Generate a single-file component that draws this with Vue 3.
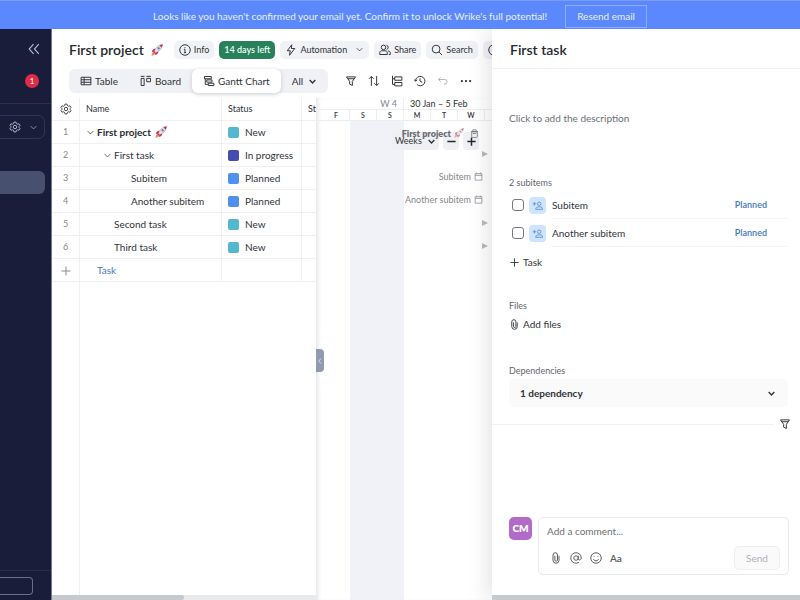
<script setup>
import { h, ref } from 'vue'

const shapes = {
  collapse: ['M7.5 2.5 2.5 8l5 5.5M13.5 2.5 8.5 8l5 5.5'],
  gear: ['M6.6 1.5h2.8l.5 2 1.4.8 2-.6 1.4 2.5L13.3 7.6v.8l1.4 1.4-1.4 2.5-2-.6-1.4.8-.5 2H6.6l-.5-2-1.4-.8-2 .6-1.4-2.5 1.4-1.4v-.8L1.300 6.200l1.400-2.500 2 .6 1.400-.8z', 'M10.300 8a2.300 2.300 0 1 1-4.600 0 2.300 2.300 0 0 1 4.600 0z'],
  chevron: ['M3 5.500 8 10.500l5-5'],
  left: ['M10 3 5.500 8 10 13'],
  info: ['M15 8A7 7 0 1 1 1 8a7 7 0 0 1 14 0z', 'M8 7v4.500M8 4.200v1.200M6.500 7H8M6.500 11.500h3'],
  circle: ['M15 8A7 7 0 1 1 1 8a7 7 0 0 1 14 0z'],
  bolt: ['M9 1 3 9h4l-1 6 7-9H8.500z'],
  share: ['M9 4.500a3 3 0 1 1-6 0 3 3 0 0 1 6 0z', 'M1 14v-2.500C1 9.800 2.500 9 4 9h4c1.500 0 3 .8 3 2.500V14z', 'M10 1.600a3 3 0 0 1 0 5.800M12 9.300c2 .2 3 1 3 2.700v2h-2'],
  search: ['M12 6.800a5.200 5.200 0 1 1-10.400 0 5.200 5.200 0 0 1 10.400 0z', 'm10.700 10.700 4 4'],
  table: ['M1.500 3h13v10h-13zM1.500 6.300h13M1.500 9.700h13M5.500 3v10'],
  board: ['M1.500 4.500h4V14h-4zM9 4.500h5V9H9zM1 1.800h5M8.500 1.800h6'],
  gantt: ['M2 2h9v3H2zM5 6.500h7v3H5zM7 11h7.500v3H7zM3 5v7.500h4'],
  filter: ['M2 2.500h12L9.800 8.500V14l-3.600-1.800V8.500z', 'M4 5h8'],
  sort: ['M4.500 14.500V2M1.500 5l3-3 3 3M11.500 1.500V14M8.500 11l3 3 3-3'],
  hierarchy: ['M2 1v11.500h3M2 5h3M5 2.500h9.500v4.500H5zM5 10h9.500v4.500H5z'],
  history: ['M2 8a6.300 6.300 0 1 1 1.800 4.500M.3 6 2 8.300 4.300 6.500M8 4.500V8l3 2'],
  undo: ['M5 3 2 6l3 3M2 6h8.500a3 3 0 0 1 0 6H9'],
  dots: ['M2.500 8h.01M8 8h.01M13.500 8h.01'],
  plus: ['M8 2v12M2 8h12'],
  minus: ['M2 8h12'],
  calendar: ['M2 3h12v11.500H2zM2 6h12M4.500 1v2M11.500 1v2'],
  clipboard: ['M3 5h10v8.500a1.500 1.500 0 0 1-1.500 1.500h-7A1.500 1.500 0 0 1 3 13.500zM1.500 4.500h13M5 4.500v-3h6v3M5 8h6'],
  clip: ['M12 5v6a4 4 0 0 1-8 0V4a3 3 0 0 1 6 0v7a1.800 1.800 0 0 1-3.500 0V5'],
  assign: ['M3.500 3v5M1 5.500h5M13 5.500a2.500 2.500 0 1 1-5 0 2.500 2.500 0 0 1 5 0z', 'M5.500 13.500C5.500 11 7 10 9 10h3c2 0 3.500 1 3.500 3.500z'],
  at: ['M11 8a3 3 0 1 1-6 0 3 3 0 0 1 6 0z', 'M11 5v4c0 2.500 4 2.200 4-1a7 7 0 1 0-3 5.700'],
  smile: ['M15 8A7 7 0 1 1 1 8a7 7 0 0 1 14 0z', 'M4.500 9.500a3.800 3.800 0 0 0 7 0M5.500 5.500v1M10.500 5.500v1']
}

const Icon = (props) =>
  h('svg', { class: 'icon', viewBox: '0 0 16 16', 'aria-hidden': 'true' }, shapes[props.name].map((d) => h('path', { d })))
Icon.props = ['name']

const Rocket = () =>
  h('svg', { class: 'rocket', viewBox: '0 0 16 16', 'aria-hidden': 'true' }, [
    h('path', { d: 'M3.500 10.500C1.500 11 1 13 .5 15.500c2.500-.5 4.500-1 5-3z', fill: '#f08a4b' }),
    h('path', { d: 'M6 6.500C3.500 6 2 8 1.200 10.500L5 10zM9.500 10c.5 2.500-1.500 4-4 4.800L6 11z', fill: '#c92a50' }),
    h('path', { d: 'M4.500 9.500C6 5 9.500 1.500 15.500.5 14.500 6.500 11 10 6.500 11.500z', fill: '#dfe0ea', stroke: '#8b7590', 'stroke-width': '.6' }),
    h('path', { d: 'M11.300 1.900c1.400-.8 2.700-1.200 4.200-1.400-.2 1.500-.6 2.800-1.400 4.200z', fill: '#c92a50' }),
    h('path', { d: 'm3.700 9.400 2.900 2.900-1 1-2.900-2.900z', fill: '#c92a50' }),
    h('circle', { cx: 10.2, cy: 5.8, r: 1.5, fill: '#5d6f9f' })
  ])

const rows = [
  { name: 'First project', level: 0, status: 'New', tone: 'new', open: true, project: true },
  { name: 'First task', level: 1, status: 'In progress', tone: 'progress', open: true },
  { name: 'Subitem', level: 2, status: 'Planned', tone: 'planned' },
  { name: 'Another subitem', level: 2, status: 'Planned', tone: 'planned' },
  { name: 'Second task', level: 1, status: 'New', tone: 'new' },
  { name: 'Third task', level: 1, status: 'New', tone: 'new' }
]
const tools = [
  ['filter', 'Filter'], ['sort', 'Sort'], ['hierarchy', 'Hierarchy'],
  ['history', 'History'], ['undo', 'Undo'], ['dots', 'More']
]
const days = ['F', 'S', 'S', 'M', 'T', 'W']
const subitems = ['Subitem', 'Another subitem']
const zoom = ref('Weeks')
const comment = ref('')
</script>

<template>
  <div class="app">
    <div class="banner">
      <span>Looks like you haven't confirmed your email yet. Confirm it to unlock Wrike's full potential!</span>
      <button class="resend">Resend email</button>
    </div>
    <div class="body">
      <nav class="sidebar">
        <button class="collapse" aria-label="Collapse sidebar"><Icon name="collapse" /></button>
        <span class="badge">1</span>
        <div class="space">
          <button class="space-settings" aria-label="Space settings"><Icon name="gear" /><Icon name="chevron" class="small" /></button>
        </div>
        <a href="#" class="current" aria-label="First project"></a>
        <div class="side-foot"><button class="side-action" aria-label="Invite"></button></div>
      </nav>

      <main class="main">
        <header class="head">
          <h1>First project <Rocket /></h1>
          <button class="chip"><Icon name="info" />Info</button>
          <button class="chip trial">14 days left</button>
          <button class="chip auto"><Icon name="bolt" /><span>Automation</span><Icon name="chevron" class="small" /></button>
          <button class="chip"><Icon name="share" />Share</button>
          <button class="chip"><Icon name="search" />Search</button>
          <button class="chip" aria-label="Help"><Icon name="circle" /></button>
        </header>
        <div class="toolbar">
          <div class="tabs">
            <button class="tab"><Icon name="table" />Table</button>
            <button class="tab"><Icon name="board" />Board</button>
            <button class="tab active"><Icon name="gantt" />Gantt Chart</button>
            <button class="tab">All<Icon name="chevron" class="small bold" /></button>
          </div>
          <div class="tools">
            <button v-for="[icon, label] in tools" :key="icon" :class="icon" :aria-label="label"><Icon :name="icon" /></button>
          </div>
        </div>

        <div class="work">
          <section class="grid">
            <table>
              <colgroup><col class="c-num" /><col class="c-name" /><col class="c-status" /><col /></colgroup>
              <thead>
                <tr>
                  <th class="num"><button aria-label="Table settings"><Icon name="gear" /></button></th>
                  <th>Name</th>
                  <th>Status</th>
                  <th>St</th>
                </tr>
              </thead>
              <tbody>
                <tr v-for="(row, i) in rows" :key="row.name">
                  <td class="num">{{ i + 1 }}</td>
                  <td>
                    <div class="name" :class="['level-' + row.level, { project: row.project }]">
                      <span class="twist"><Icon v-if="row.open" name="chevron" class="small" /></span>
                      <span>{{ row.name }}</span><Rocket v-if="row.project" />
                    </div>
                  </td>
                  <td><div class="status"><i :class="row.tone"></i>{{ row.status }}</div></td>
                  <td></td>
                </tr>
                <tr>
                  <td class="num"><Icon name="plus" class="add" /></td>
                  <td><a href="#" class="add-task">Task</a></td>
                  <td></td>
                  <td></td>
                </tr>
              </tbody>
            </table>
            <div class="track"><div class="thumb"></div></div>
          </section>

          <section class="gantt">
            <button class="splitter" aria-label="Hide table"><Icon name="left" /></button>
            <div class="weeks"><span class="week past">W 4</span><span class="week">30 Jan – 5 Feb</span></div>
            <div class="days"><span v-for="(d, i) in days" :key="i">{{ d }}</span></div>
            <div class="canvas">
              <div class="weekend"></div>
              <div class="zoom">
                <label class="scale">
                  <select v-model="zoom" aria-label="Time scale"><option>Weeks</option><option>Days</option><option>Months</option></select>
                  <Icon name="chevron" class="small bold" />
                </label>
                <button aria-label="Zoom out"><Icon name="minus" /></button>
                <button aria-label="Zoom in"><Icon name="plus" /></button>
              </div>
              <ul class="bars">
                <li class="title">First project <Rocket /><Icon name="clipboard" /></li>
                <li class="mark"></li>
                <li>Subitem <Icon name="calendar" /></li>
                <li>Another subitem <Icon name="calendar" /></li>
                <li class="mark"></li>
                <li class="mark"></li>
              </ul>
            </div>
          </section>
        </div>
      </main>

      <aside class="panel">
        <h2>First task</h2>
        <div class="details">
          <p class="description">Click to add the description</p>
          <h3>2 subitems</h3>
          <ul class="subitems">
            <li v-for="(s, i) in subitems" :key="s">
              <input :id="'sub-' + i" type="checkbox" />
              <span class="assign"><Icon name="assign" /></span>
              <label :for="'sub-' + i">{{ s }}</label>
              <span class="state">Planned</span>
            </li>
          </ul>
          <button class="plain"><Icon name="plus" />Task</button>
          <h3 class="files">Files</h3>
          <button class="plain"><Icon name="clip" />Add files</button>
          <h3 class="deps">Dependencies</h3>
          <button class="dependency">1 dependency<Icon name="chevron" class="small bold" /></button>
        </div>
        <div class="stream"><hr /><button aria-label="Filter activity"><Icon name="filter" /></button></div>
        <form class="comment" @submit.prevent>
          <span class="avatar">CM</span>
          <div class="editor">
            <input v-model="comment" type="text" aria-label="Comment" placeholder="Add a comment..." />
            <div class="actions">
              <button type="button" aria-label="Attach"><Icon name="clip" /></button>
              <button type="button" aria-label="Mention"><Icon name="at" /></button>
              <button type="button" aria-label="Emoji"><Icon name="smile" /></button>
              <button type="button" class="format">Aa</button>
              <button class="send" disabled>Send</button>
            </div>
          </div>
        </form>
        <div class="panel-scroll"></div>
      </aside>
    </div>
  </div>
</template>

<style>
body { overflow: hidden; }
</style>

<style scoped>
.app, .app * { box-sizing: border-box; }
.app {
  height: 100vh;
  display: flex;
  flex-direction: column;
  font: 10px/16px Lato, "Open Sans", sans-serif;
  color: #2f333a;
  background: #fff;
}
button, input, select { font: inherit; color: inherit; margin: 0; padding: 0; border: 0; background: none; }
button { display: flex; align-items: center; justify-content: center; white-space: nowrap; }
h1, h2, h3, p, ul { margin: 0; padding: 0; font-weight: 400; list-style: none; }
a { text-decoration: none; }
.app :deep(.icon) { width: 12px; height: 12px; flex: none; fill: none; stroke: currentColor; stroke-width: 1.3; }
.app :deep(.small) { width: 9px; height: 9px; }
.app :deep(.bold) { stroke-width: 2.5; }
.app :deep(.rocket) { width: 12px; height: 12px; flex: none; }

.banner {
  flex: none;
  height: 29px;
  display: flex;
  align-items: center;
  justify-content: center;
  gap: 18px;
  padding-top: 2px;
  background: #5b89fd;
  border-top: 1px solid #789df5;
  color: #e6eeff;
  white-space: nowrap;
}
.resend { height: 23px; padding: 0 11px; border: 1px solid #8eaefd; }

.body { flex: 1; min-height: 0; display: flex; }

.sidebar {
  flex: none;
  width: 52px;
  display: flex;
  flex-direction: column;
  background: #191d39;
  border-right: 1px solid #747895;
  color: #b6b9c9;
}
.collapse { align-self: flex-end; margin: 13px 10px 18px 0; }
.collapse .icon { width: 14px; height: 14px; }
.badge {
  align-self: flex-end;
  width: 14px;
  height: 14px;
  margin-right: 12px;
  border-radius: 50%;
  background: #df2d48;
  color: #fff;
  font-size: 8px;
  line-height: 14px;
  text-align: center;
}
.space { margin-top: 15px; padding: 11px 6px 0 0; border-top: 1px solid #2b3050; }
.space-settings {
  width: 100%;
  height: 24px;
  gap: 8px;
  justify-content: flex-end;
  padding-right: 6px;
  border: 1px solid #303554;
  border-left: 0;
  border-radius: 0 7px 7px 0;
}
.current { height: 23px; margin: 32px 6px 0 0; border-radius: 0 6px 6px 0; background: #47506f; }
.side-foot { margin-top: auto; padding: 6px 18px 5px 0; border-top: 1px solid #292d4a; }
.side-action { width: 100%; height: 18px; border: 1px solid #6b6f86; border-left: 0; border-radius: 0 4px 4px 0; }

.main { flex: 1; min-width: 0; overflow: hidden; display: flex; flex-direction: column; }
.head { display: flex; align-items: center; gap: 5px; padding: 11px 0 0 17px; height: 30px; }
h1 { display: flex; align-items: center; gap: 7px; margin-right: 6px; font-size: 14px; line-height: 18px; font-weight: 600; white-space: nowrap; color: #25282e; }
h1 :deep(.rocket), h1 .rocket { width: 16px; height: 16px; }
.chip { flex: none; height: 18px; gap: 3px; padding: 0 5px; border-radius: 5px; background: #f1f2f5; font-size: 9px; }
.trial { background: #28815b; color: #eafff4; font-weight: 600; }
.auto span { margin-right: 5px; }
.toolbar { display: flex; align-items: center; gap: 17px; padding: 10px 0 5px 17px; }
.tabs { flex: none; display: flex; border-radius: 6px; background: #f0f1f5; }
.tab { height: 24px; gap: 3px; padding: 0 11px; border-radius: 6px; }
.tab.active { background: #fff; box-shadow: 0 1px 4px #c8cad0; }
.tab .small { margin-left: 2px; }
.tools { display: flex; gap: 11px; }
.tools .undo { color: #b4b6bb; }
.tools .dots .icon { stroke-width: 3; stroke-linecap: round; }

.work { flex: 1; min-height: 0; display: flex; }
.grid { flex: 3 1 0; min-width: 0; display: flex; flex-direction: column; overflow: hidden; background: linear-gradient(to right, transparent 27px, #eff0f2 27px, #eff0f2 28px, transparent 28px); }
table { width: 100%; table-layout: fixed; border-collapse: separate; border-spacing: 0; }
.c-num { width: 28px; }
.c-name { width: 142px; }
.c-status { width: 80px; }
th, td { height: 23px; padding: 0 0 0 6px; border-right: 1px solid #eff0f2; border-bottom: 1px solid #eff0f2; text-align: left; font-weight: 400; white-space: nowrap; overflow: hidden; }
th { font-size: 9px; }
th:last-child, td:last-child { border-right: 0; }
.num { padding: 0; text-align: center; color: #85898f; font-size: 9px; }
.num button { width: 100%; color: #42464d; }
.num .icon { vertical-align: middle; }
.add { stroke-width: 1; }
.name { display: flex; align-items: center; }
.name .rocket { margin-left: 4px; }
.twist { width: 11px; display: flex; }
.level-1 { padding-left: 17px; }
.level-2 { padding-left: 34px; }
.project { font-weight: 700; color: #26292f; }
.status { display: flex; align-items: center; gap: 6px; }
.status i { width: 11px; height: 11px; border-radius: 2px; }
.new { background: #52b7cf; }
.progress { background: #444bb1; }
.planned { background: #4f91ee; }
.add-task { padding-left: 11px; color: #4579c0; }
.track { margin-top: auto; height: 5px; background: #e8eaeb; }
.thumb { width: 50%; height: 5px; border-radius: 0 3px 3px 0; background: #c5cacf; }

.gantt { position: relative; flex: 2 1 0; min-width: 0; display: flex; flex-direction: column; box-shadow: inset 4px 0 4px -2px #e4e5e8; }
.splitter { position: absolute; z-index: 2; left: 0; top: 251px; width: 8px; height: 23px; border-radius: 0 4px 4px 0; background: #8d9ab2; color: #fff; }
.splitter .icon { width: 8px; height: 8px; }
.weeks { display: grid; grid-template-columns: 88px 1fr; height: 12px; font-size: 9px; line-height: 12px; border-bottom: 1px solid #eceef0; }
.week { padding-left: 6px; white-space: nowrap; overflow: hidden; }
.past { text-align: right; padding-right: 6px; border-right: 1px solid #eceef0; color: #85888d; }
.days { display: grid; grid-template-columns: repeat(6, 27px); padding-left: 7px; height: 11px; font-size: 7px; line-height: 11px; font-weight: 600; text-align: center; border-bottom: 1px solid #eceef0; }
.days span { border-right: 1px solid #eceef0; }
.canvas { position: relative; flex: 1; }
.weekend { width: 54px; height: 100%; margin-left: 34px; background: #f1f2f7; }
.bars { position: absolute; top: -1px; right: 9px; left: 0; color: #85888c; font-size: 9px; }
.bars li { display: flex; align-items: center; justify-content: flex-end; gap: 3px; height: 23px; line-height: 23px; white-space: nowrap; }
.bars .icon { width: 9px; height: 9px; }
.bars .rocket { opacity: .6; width: 10px; height: 10px; }
.bars .title { height: 22px; padding: 4px 4px 0 0; font-weight: 800; color: #6b6e74; }
.title .icon { margin-left: 3px; }
.mark::after { content: ""; border: 3px solid transparent; border-left: 6px solid #b9bbbe; border-right: 0; margin-right: -5px; }
.zoom { position: absolute; top: 11px; right: 13px; display: flex; gap: 4px; }
.scale, .zoom button { display: flex; align-items: center; height: 18px; background: #eff0f3; border-radius: 4px; }
.scale { width: 47px; padding: 0 3px; font-size: 9px; }
select { flex: 1; min-width: 0; appearance: none; }
.zoom button { width: 16px; color: #25282e; }
.zoom button .icon { width: 11px; height: 11px; stroke-width: 2.2; }

.panel { position: relative; z-index: 3; flex: none; width: 308px; display: flex; flex-direction: column; background: #fff; box-shadow: -3px 0 22px #0000001f; clip-path: inset(0 0 0 -40px); }
h2 { height: 40px; padding: 10px 17px 0 18px; border-bottom: 1px solid #f1f1f3; font-size: 14px; line-height: 21px; font-weight: 600; color: #25282e; }
.details { display: flex; flex-direction: column; padding: 41px 12px 0 17px; }
.description { color: #6c7076; }
h3 { margin-top: 49px; font-size: 9px; line-height: 16px; color: #62666d; }
.subitems li { display: flex; align-items: center; height: 28px; }
.subitems input { appearance: none; width: 12px; height: 12px; margin: 0 5px 0 3px; border: 1px solid #777b80; border-radius: 3px; background: #fff; }
.assign { display: flex; align-items: center; justify-content: center; width: 17px; height: 17px; margin-right: 6px; border-radius: 4px; background: #cee3fc; color: #5b91d2; }
.assign .icon { width: 11px; height: 11px; }
.subitems label { flex: 1; height: 28px; line-height: 28px; border-bottom: 1px solid #f4f4f6; }
.state { height: 28px; padding-right: 21px; border-bottom: 1px solid #f4f4f6; line-height: 28px; font-size: 9px; font-weight: 600; color: #3e78bd; }
.plain { align-self: flex-start; height: 20px; gap: 3px; }
.subitems + .plain { margin-top: 5px; }
.plain .icon { width: 11px; height: 11px; }
.files { margin-top: 26px; }
.deps { margin-top: 29px; }
.dependency { justify-content: space-between; height: 28px; padding: 0 12px 0 11px; border-radius: 5px; background: #fafafb; font-weight: 700; }
.stream { display: flex; align-items: center; gap: 5px; margin-top: 11px; padding-right: 9px; }
.stream hr { flex: 1; height: 1px; margin: 0; border: 0; background: #eff0f2; }
.comment { display: flex; align-items: flex-start; gap: 6px; margin-top: auto; padding: 0 11px 20px 17px; }
.avatar { width: 23px; height: 23px; border-radius: 5px; background: #b26bc9; color: #fff; font-weight: 800; line-height: 23px; text-align: center; }
.editor { flex: 1; min-width: 0; border: 1px solid #e8e9ec; border-radius: 5px; padding: 4px 8px; }
.editor input { display: block; width: 100%; height: 18px; outline: 0; }
.editor input::placeholder { color: #6c7076; opacity: 1; }
.actions { display: flex; align-items: center; gap: 8px; margin-top: 6px; padding-left: 3px; color: #555960; }
.format { font-weight: 600; }
.send { width: 46px; height: 24px; margin-left: auto; border: 1px solid #eceef0; border-radius: 5px; background: #fafafb; color: #b0b3b8; }
.panel-scroll { height: 5px; background: #c5cacf; }
</style>
